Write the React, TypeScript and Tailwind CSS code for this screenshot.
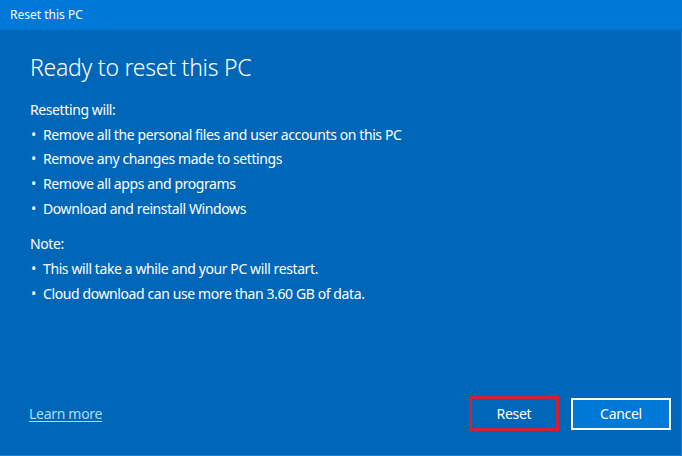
import React from 'react';

const RESET_ITEMS = [
  'Remove all the personal files and user accounts on this PC',
  'Remove any changes made to settings',
  'Remove all apps and programs',
  'Download and reinstall Windows',
];

const NOTE_ITEMS = [
  'This will take a while and your PC will restart.',
  'Cloud download can use more than 3.60 GB of data.',
];

const BulletList = ({ items }: { items: string[] }) => (
  <ul>
    {items.map((item) => (
      <li key={item} className="flex h-[24.6px] items-center">
        <span className="w-[13px] pl-[1px]">•</span>
        <span>{item}</span>
      </li>
    ))}
  </ul>
);

export default function App() {
  return (
    <div
      className="flex h-[456px] w-[682px] flex-col overflow-hidden text-white"
      style={{ fontFamily: '"Noto Sans", "Open Sans", sans-serif' }}
    >
      <div className="flex h-[30px] shrink-0 items-center bg-[#0078d7] pl-[10px] text-[12px]">
        Reset this PC
      </div>

      <div className="flex flex-1 flex-col border-r border-b border-[#1a7fd0] bg-[#0067b8]">
        <div className="pl-[30px] text-[14px] tracking-[-0.4px]">
          <h1 className="mt-[21px] h-[32px] text-[23px] font-light leading-[32px] tracking-[-0.25px]">
            Ready to reset this PC
          </h1>

          <p className="mt-[14px] flex h-[25px] items-center">Resetting will:</p>
          <BulletList items={RESET_ITEMS} />

          <p className="mt-[11px] flex h-[25px] items-center">Note:</p>
          <BulletList items={NOTE_ITEMS} />
        </div>

        <div className="mt-auto flex items-center justify-between pb-[24px] pl-[29px] pr-[10px] tracking-[-0.3px]">
          <a href="#" className="text-[14px] text-[#a6dcff] underline underline-offset-2">
            Learn more
          </a>
          <div className="flex items-center gap-[12px]">
            <button className="flex h-[35px] w-[90px] items-center justify-center border-[3px] border-[#d0213c] text-[14px]">
              Reset
            </button>
            <button className="flex h-[32px] w-[100px] items-center justify-center border-2 border-white bg-[#0078d7] text-[14px]">
              Cancel
            </button>
          </div>
        </div>
      </div>
    </div>
  );
}
